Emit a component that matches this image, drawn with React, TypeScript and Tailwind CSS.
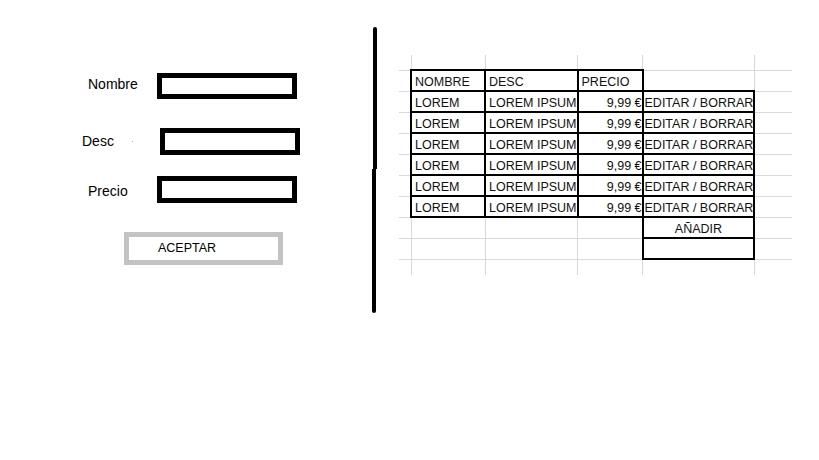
import clsx from "clsx"

type Cell = { t?: string; b?: boolean; a?: "l" | "r" | "c" | "e" }

const gray: Cell[] = [{}, {}, {}, {}, {}, {}]
const item: Cell[] = [
  {},
  { t: "LOREM", b: true },
  { t: "LOREM IPSUM", b: true },
  { t: "9,99 €", b: true, a: "r" },
  { t: "EDITAR / BORRAR", b: true, a: "e" },
  {},
]

const rows: { h: string; cells: Cell[] }[] = [
  { h: "h-[15px]", cells: gray },
  {
    h: "h-[21px]",
    cells: [
      {},
      { t: "NOMBRE", b: true },
      { t: "DESC", b: true },
      { t: "PRECIO", b: true },
      {},
      {},
    ],
  },
  ...Array.from({ length: 6 }, () => ({ h: "h-[21px]", cells: item })),
  { h: "h-[21px]", cells: [{}, {}, {}, {}, { t: "AÑADIR", b: true, a: "c" }, {}] },
  { h: "h-[21px]", cells: [{}, {}, {}, {}, { t: "", b: true }, {}] },
  { h: "h-[16px]", cells: gray },
]

function Sheet() {
  const last = rows.length - 1
  return (
    <table className="ml-[22px] mt-[55px] table-fixed border-collapse self-start text-[12.5px] leading-[14px] text-[#111]">
      <colgroup>
        <col className="w-[12px]" />
        <col className="w-[74px]" />
        <col className="w-[92px]" />
        <col className="w-[65px]" />
        <col className="w-[111px]" />
        <col className="w-[38px]" />
      </colgroup>
      <tbody>
        {rows.map((row, ri) => (
          <tr key={ri} className={row.h}>
            {row.cells.map((c, ci) => (
              <td
                key={ci}
                className={clsx(
                  "px-0 pb-0 pt-[2px] align-middle whitespace-nowrap",
                  c.b ? "border-2 border-black" : "border border-[#d9d9d9]",
                  ri === 0 && "border-t-0",
                  ri === last && "border-b-0",
                  ci === 0 && "border-l-0",
                  ci === 5 && "border-r-0",
                  c.a === "r" && "text-right",
                  c.a === "c" && "text-center",
                  c.a === "e" && "pl-px",
                  !c.a && "pl-[3px]"
                )}
              >
                {c.t}
              </td>
            ))}
          </tr>
        ))}
      </tbody>
    </table>
  )
}

export default function App() {
  return (
    <div className="flex h-[460px] w-[819px] bg-white font-['Liberation_Sans',Arial,sans-serif] text-black">
      <section className="flex w-[372px] flex-col text-[14px]">
        <div className="mt-[73px] flex h-[26px] items-center">
          <span className="w-[157px] pb-[4px] pl-[88px]">Nombre</span>
          <div className="h-[26px] w-[140px] border-[5px] border-black" />
        </div>
        <div className="mt-[29px] flex h-[27px] items-center">
          <span className="flex w-[160px] items-center pl-[82px]">
            Desc
            <span className="ml-[18px] h-px w-px bg-[#8fb3d9]" />
          </span>
          <div className="h-[27px] w-[140px] border-[5px] border-black" />
        </div>
        <div className="mt-[21px] flex h-[27px] items-center">
          <span className="w-[157px] pl-[88px] pt-[3px]">Precio</span>
          <div className="h-[27px] w-[140px] border-[5px] border-black" />
        </div>
        <button className="ml-[124px] mt-[29px] flex h-[33px] w-[159px] items-center border-[5px] border-[#c3c3c3] pl-[29px] text-[12.5px]">
          ACEPTAR
        </button>
      </section>

      <div className="mt-[27px] flex flex-col">
        <div className="ml-px h-[142px] w-[4px] rounded-t-sm bg-black" />
        <div className="h-[144px] w-[4px] rounded-b-sm bg-black" />
      </div>

      <Sheet />
    </div>
  )
}
